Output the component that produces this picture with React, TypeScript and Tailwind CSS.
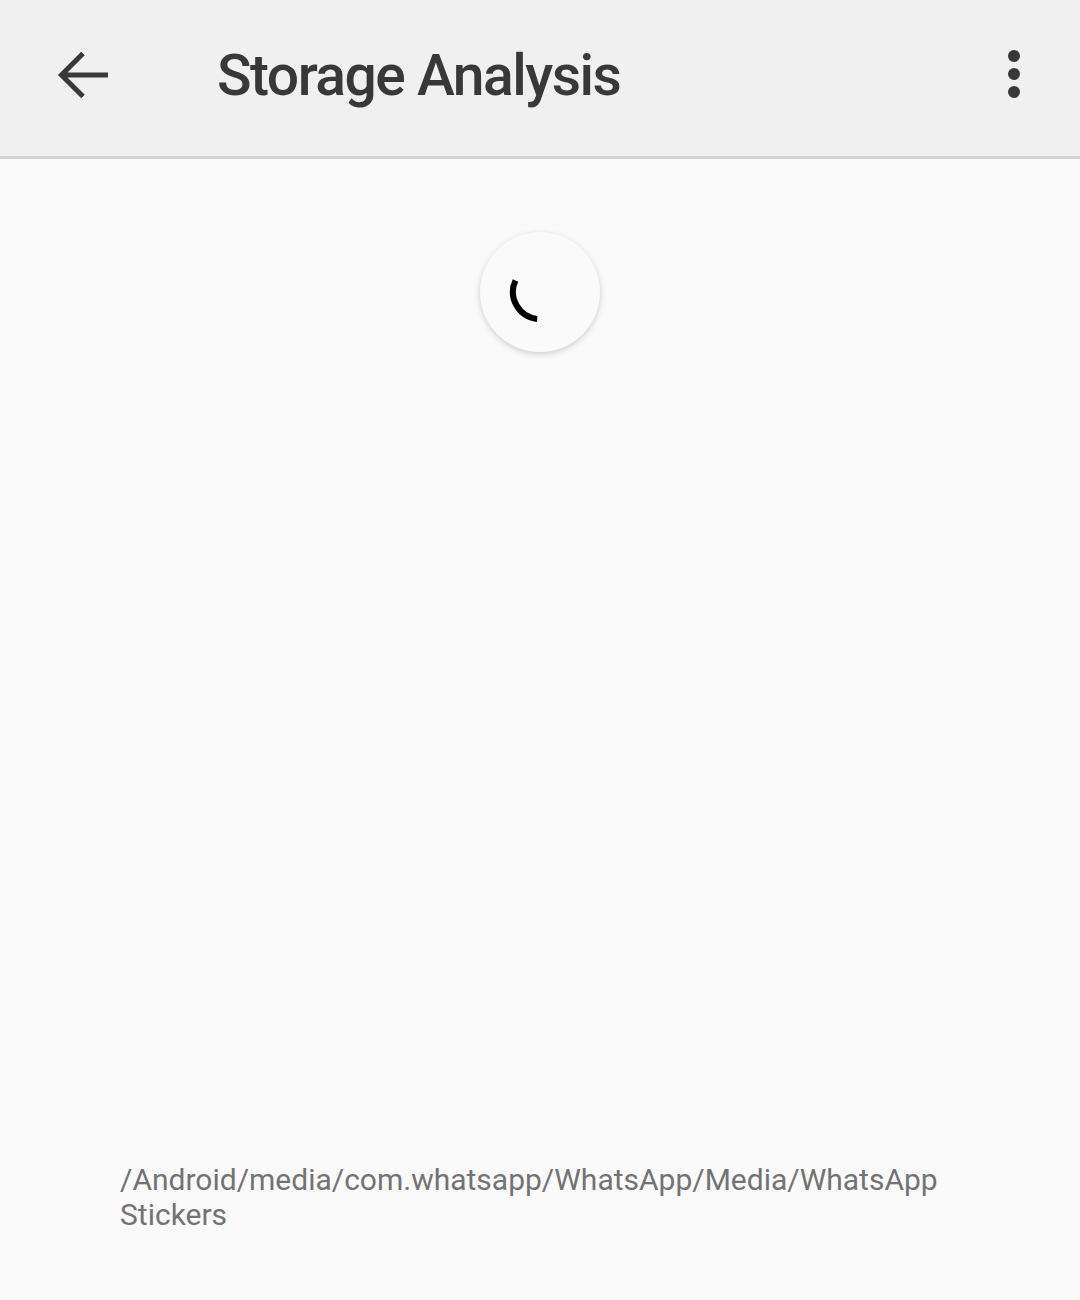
import React from "react";

export default function App() {
  return (
    <div className="w-[1080px] h-[1300px] bg-[#fafafa] flex flex-col" style={{ fontFamily: "Roboto, 'Noto Sans', sans-serif" }}>
      <div className="h-[159px] bg-[#f0f0f0] border-b-[3px] border-[#d2d2d2] flex items-center shrink-0 pb-[6px]">
        <div className="w-[168px] flex items-center justify-center">
          <svg width="56" height="56" viewBox="0 0 56 56">
            <path d="M52 28H6M27 6.5L5.5 28 27 49.5" fill="none" stroke="#383838" strokeWidth="5" strokeLinecap="butt" strokeLinejoin="miter" />
          </svg>
        </div>
        <div className="flex-1 pl-[49px] text-[57px] font-medium tracking-[-1.5px] text-[#383838] leading-none">Storage Analysis</div>
        <div className="w-[132px] flex items-center justify-center -mt-[2px]">
          <div className="flex flex-col gap-[6px]">
            <div className="w-[12px] h-[12px] rounded-full bg-[#383838]" />
            <div className="w-[12px] h-[12px] rounded-full bg-[#383838]" />
            <div className="w-[12px] h-[12px] rounded-full bg-[#383838]" />
          </div>
        </div>
      </div>
      <div className="flex-1 flex flex-col">
        <div className="flex justify-center pt-[73px]">
          <div className="w-[120px] h-[120px] rounded-full bg-[#fafafa] shadow-[0_2px_6px_rgba(0,0,0,0.18)] flex items-center justify-center">
            <svg width="120" height="120" viewBox="0 0 120 120">
              <path d="M 57.2 86.9 A 27 27 0 0 1 35.5 48.6" fill="none" stroke="#000" strokeWidth="6" />
            </svg>
          </div>
        </div>
        <div className="flex-1" />
        <div className="px-[120px] pb-[68px] text-[30px] leading-[35px] text-[#737373]">
          /Android/media/com.whatsapp/WhatsApp/Media/WhatsApp Stickers
        </div>
      </div>
    </div>
  );
}
